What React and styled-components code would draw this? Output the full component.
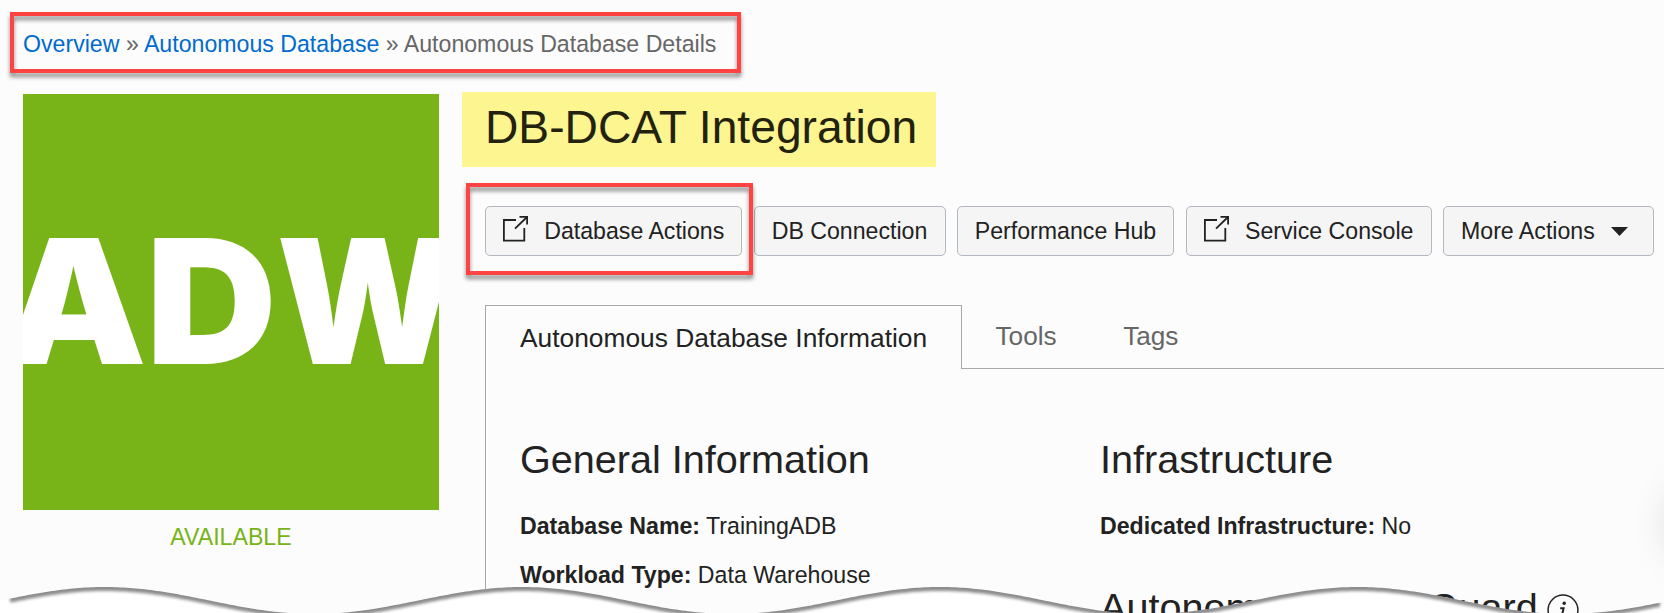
import React from 'react';
import styled, { createGlobalStyle } from 'styled-components';

const GlobalStyle = createGlobalStyle`
  * { box-sizing: border-box; }
  body {
    margin: 0;
    background: #fcfcfc;
    color: #222;
    font-family: "Liberation Sans", Arial, sans-serif;
    font-size: 23.15px;
  }
`;

const Page = styled.div`
  position: relative;
  width: 1664px;
  height: 613px;
  overflow: hidden;
  background: #fcfcfc;
`;

const Breadcrumb = styled.nav`
  padding: 28px 0 0 23px;
  height: 92px;
  line-height: 32px;
  color: #666;
  white-space: pre;
`;

const Crumb = styled.a`
  color: #006bcf;
  text-decoration: none;
`;

const Main = styled.main`
  display: flex;
  gap: 46px;
  padding-left: 23px;
`;

const Side = styled.aside`
  flex: none;
  width: 416px;
  padding-top: 2px;
`;

const Tile = styled.div`
  display: flex;
  justify-content: center;
  width: 416px;
  height: 416px;
  overflow: hidden;
  background: #78b318;
  color: #fff;
  font-family: Inter, "Liberation Sans", sans-serif;
  font-weight: 900;
  font-size: 173.3px;
  line-height: 415px;
`;

const Letter = styled.span`
  flex: none;
  display: flex;
  justify-content: center;
  width: ${(p) => p.$width}px;
  transform: scaleX(${(p) => p.$stretch});
`;

const Status = styled.div`
  margin-top: 11px;
  line-height: 32px;
  text-align: center;
  color: #78b318;
`;

const Content = styled.section`
  flex: none;
  width: 1179px;
`;

const Title = styled.h1`
  margin: 0 0 0 -23px;
  padding-left: 23px;
  width: 474px;
  height: 75px;
  background: #fcf590;
  color: #22220f;
  font-weight: 400;
  font-size: 46.2px;
  line-height: 70px;
  white-space: nowrap;
`;

const Toolbar = styled.div`
  display: flex;
  gap: 11.5px;
  margin-top: 39px;
`;

const Button = styled.button`
  flex: none;
  display: flex;
  align-items: center;
  justify-content: ${(p) => (p.$menu ? 'flex-start' : 'center')};
  gap: 16.5px;
  width: ${(p) => p.$width}px;
  height: 50px;
  padding: 0 0 0 ${(p) => (p.$menu ? 17 : 0)}px;
  border: 1px solid #b2b7c0;
  border-radius: 5px;
  background: #f5f5f5;
  color: #222;
  font: inherit;
  white-space: nowrap;
`;

const TabBar = styled.div`
  display: flex;
  height: 64px;
  margin-top: 49px;
`;

const ActiveTab = styled.div`
  width: 477px;
  padding-left: 34px;
  border: 1px solid #a8a8a8;
  border-bottom: none;
  font-size: 26.35px;
  line-height: 64px;
  white-space: nowrap;
`;

const OtherTabs = styled.div`
  flex: 1;
  display: flex;
  gap: 66.5px;
  padding-left: 33.5px;
  border-bottom: 1px solid #a8a8a8;
  color: #666;
  font-size: 26.2px;
  line-height: 62px;
`;

const Panel = styled.div`
  display: flex;
  height: 260px;
  padding: 66px 0 0 34px;
  border-left: 1px solid #a8a8a8;
`;

const Column = styled.div`
  flex: none;
  width: 580px;
`;

const Heading = styled.h2`
  display: flex;
  margin: 0 0 19px;
  font-weight: 400;
  font-size: 39.6px;
  line-height: 48px;
  white-space: nowrap;
`;

const Field = styled.div`
  margin-bottom: 1px;
  line-height: 48px;
`;

const NextSection = styled.div`
  margin-top: 33px;
`;

const Callout = styled.div`
  position: absolute;
  left: ${(p) => p.$x}px;
  top: ${(p) => p.$y}px;
  width: ${(p) => p.$w}px;
  height: ${(p) => p.$h}px;
  border: 4px solid #ff4343;
  filter: drop-shadow(0 4px 2px rgba(0, 0, 0, 0.45));
  pointer-events: none;
`;

const HelpShadow = styled.div`
  position: absolute;
  left: 1665px;
  top: 488px;
  width: 80px;
  height: 72px;
  border-radius: 20px;
  box-shadow: 0 0 34px rgba(0, 0, 0, 0.1);
`;

const TornEdge = styled.svg`
  position: absolute;
  left: 0;
  bottom: 0;
  display: block;
`;

const ExternalSvg = styled.svg`
  flex: none;
  margin-bottom: 5px;
`;

const InfoSvg = styled.svg`
  flex: none;
  margin: 11px 0 0 9px;
`;

const ExternalIcon = () => (
  <ExternalSvg width="25" height="26" viewBox="0 0 25 26" fill="none" stroke="#222" strokeWidth="1.8">
    <path d="M13 4H.9V24.6H21.3V12" />
    <path d="M12 12.6 24 1" />
    <path d="M16.5 .9H24.1V8.5" />
  </ExternalSvg>
);

const Caret = () => (
  <svg width="17" height="9" viewBox="0 0 17 9">
    <path d="M0 0H17L8.5 9Z" fill="#222" />
  </svg>
);

const InfoIcon = () => (
  <InfoSvg width="32" height="32" viewBox="0 0 32 32" fill="none" stroke="#222">
    <circle cx="16" cy="16" r="14.9" strokeWidth="1.5" />
    <path d="M13.2 14.2H16.6L14.4 24H17" strokeWidth="2" />
    <circle cx="17.2" cy="9.3" r="1.7" fill="#222" stroke="none" />
  </InfoSvg>
);

const waveY = (x) => 20.5 - 13.5 * Math.cos((2 * Math.PI * (x - 105)) / 417.5);
const wave = (from, to) => {
  const points = [];
  for (let x = from; x <= to; x += 3) points.push(`${x} ${waveY(x).toFixed(2)}`);
  return points.join('L');
};

const Torn = () => (
  <TornEdge width="1664" height="33" viewBox="0 0 1664 33">
    <defs>
      <clipPath id="below">
        <path d={`M0 19.5L7 19.5L${wave(7, 1666)}V33H0Z`} shapeRendering="crispEdges" />
      </clipPath>
      <filter id="soft" x="-20" y="-30" width="1710" height="90" filterUnits="userSpaceOnUse">
        <feGaussianBlur stdDeviation="1.8" />
      </filter>
    </defs>
    <g clipPath="url(#below)">
      <rect width="1664" height="33" fill="#fff" />
      <path
        d={`M10 -20L${wave(10, 1660)}V-20Z`}
        transform="translate(0 4)"
        fill="#000"
        fillOpacity="0.45"
        filter="url(#soft)"
      />
    </g>
  </TornEdge>
);

export default function App() {
  return (
    <>
      <GlobalStyle />
      <Page>
        <Breadcrumb>
          <Crumb>Overview</Crumb> » <Crumb>Autonomous Database</Crumb> » Autonomous Database Details
        </Breadcrumb>
        <Main>
          <Side>
            <Tile>
              <Letter $width={137} $stretch={1.05}>A</Letter>
              <Letter $width={137} $stretch={1.045}>D</Letter>
              <Letter $width={176} $stretch={0.975}>W</Letter>
            </Tile>
            <Status>AVAILABLE</Status>
          </Side>
          <Content>
            <Title>DB-DCAT Integration</Title>
            <Toolbar>
              <Button $width={257}><ExternalIcon />Database Actions</Button>
              <Button $width={192}>DB Connection</Button>
              <Button $width={217}>Performance Hub</Button>
              <Button $width={246}><ExternalIcon />Service Console</Button>
              <Button $width={211} $menu>More Actions<Caret /></Button>
            </Toolbar>
            <TabBar>
              <ActiveTab>Autonomous Database Information</ActiveTab>
              <OtherTabs><span>Tools</span><span>Tags</span></OtherTabs>
            </TabBar>
            <Panel>
              <Column>
                <Heading>General Information</Heading>
                <Field><b>Database Name:</b> TrainingADB</Field>
                <Field><b>Workload Type:</b> Data Warehouse</Field>
              </Column>
              <Column>
                <Heading>Infrastructure</Heading>
                <Field><b>Dedicated Infrastructure:</b> No</Field>
                <NextSection>
                  <Heading>Autonomous Data Guard<InfoIcon /></Heading>
                </NextSection>
              </Column>
            </Panel>
          </Content>
        </Main>
        <HelpShadow />
        <Torn />
        <Callout $x={10} $y={12} $w={731} $h={61} />
        <Callout $x={466} $y={183} $w={287} $h={92} />
      </Page>
    </>
  );
}
